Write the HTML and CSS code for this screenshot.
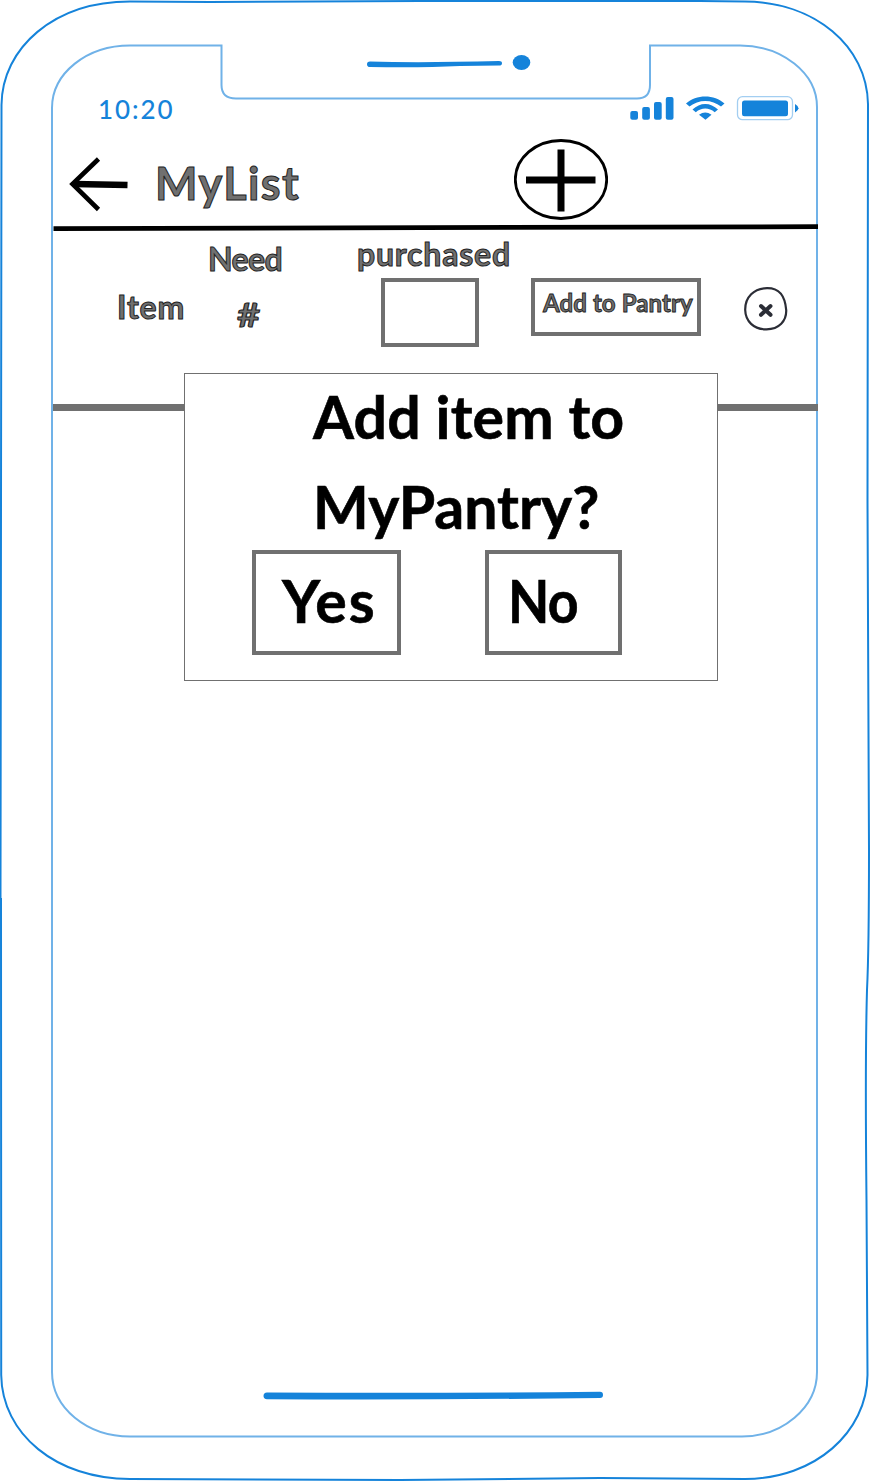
FILE: index.html
```html
<!DOCTYPE html>
<html lang="en">
<head>
<meta charset="utf-8">
<title>MyList</title>
<link rel="stylesheet" href="styles.css">
</head>
<body>
<div class="phone">
  <svg class="phone-frame" viewBox="0 0 870 1481" fill="none">
    <g stroke="#1583da" stroke-width="2">
      <path d="M0.500 900 L1.500 105 C2 48 54 1.500 130 1.500 L210 2 L420 1 L700 1 L745 1.500 C815 2 867 46 868 104 L867.500 500 L869 850 Q869 950 867 990 Q865 1060 866.500 1200 L867.500 1375 C867 1432 815 1479 745 1479 L600 1478 L400 1480 L130 1479 C56 1479 2 1434 1.200 1375 L1 898"/>
    </g>
    <path stroke="#70b2e8" stroke-width="2" d="M221.500 45.500 V85 Q221.500 98.500 236 98.500 H637 Q650 98.500 650 85 V45.500 H740 C782 45.500 817 73 817 107 V1372 C817 1408 782 1436.500 742 1436.500 H130 C87 1436.500 52 1408 52 1372 V108 C52 73 87 45.500 130 45.500 Z"/>
    <path fill="#1583da" d="M370 61.500 Q420 63 499 61 Q502 61 502 63.200 Q502 65.500 499 65.500 L460 66 Q420 68 370 67 Q367 67 367 64.200 Q367 61.500 370 61.500 Z"/>
    <ellipse fill="#1583da" cx="521.500" cy="62.500" rx="8.800" ry="7.500"/>
    <path fill="#1583da" d="M267 1392.500 Q430 1393.500 600 1391.700 Q603 1391.700 603 1395 Q603 1398 600 1398 Q430 1400 267 1399.200 Q263.500 1399 263.500 1396 Q263.500 1392.500 267 1392.500 Z"/>
  </svg>

  <main class="screen">
    <div class="status-bar">
      <span class="clock">10:20</span>
      <svg class="status-icons" viewBox="0 0 170 26" fill="#1583da">
        <rect x="0.300" y="15" width="7.700" height="8.700" rx="2"/>
        <rect x="12.200" y="11" width="7.700" height="12.700" rx="2"/>
        <rect x="24" y="6" width="7.700" height="17.700" rx="2"/>
        <rect x="35.800" y="1" width="7.700" height="22.700" rx="2"/>
        <path d="M56 7.500 C66 -2 84.500 -2 94.500 7.500 L91 10.500 C82 3 68.500 3 59.500 10.500 Z"/>
        <path d="M62.500 13.500 C70 6 80.500 6 88 13.500 L84.700 16.300 C79 11.300 71.500 11.300 65.800 16.300 Z"/>
        <path d="M69 18.700 Q75.300 14.500 81.500 18.700 L75.500 23.700 Z"/>
        <rect x="107.500" y="0.700" width="55" height="23" rx="5" fill="none" stroke="#a3cef1" stroke-width="1.300"/>
        <rect x="112" y="4.500" width="46" height="15.700" rx="2.500"/>
        <path d="M165 8 Q172 12.200 165 16.500 Z"/>
      </svg>
    </div>

    <header class="app-header">
      <svg class="back-icon" viewBox="0 0 60 56" stroke="#000" fill="none">
        <path stroke-width="4.600" d="M29.500 3 L3.500 28 L29.500 53.500"/>
        <path stroke-width="6.600" d="M5 28 L58.500 29"/>
      </svg>
      <h1 class="title sketch">MyList</h1>
      <svg class="add-icon" viewBox="0 0 94 82" stroke="#000" fill="none">
        <ellipse cx="47" cy="40.500" rx="45.700" ry="39" stroke-width="2.800"/>
        <path stroke-width="7" d="M47 10.500 V72.500 M12 41 H81.500"/>
      </svg>
    </header>
    <svg class="header-rule" viewBox="0 0 765 8"><path d="M0.500 2.200 L765 0.300 V5.100 L0.500 7 Z"/></svg>

    <section class="item-row">
      <div class="cell-item sketch">Item</div>
      <div class="cell-need"><span class="need sketch">Need</span><span class="hash sketch">#</span></div>
      <div class="cell-bought"><span class="bought sketch">purchased</span><span class="count-box"></span></div>
      <div class="pantry-button"><span class="pantry-label sketch">Add to Pantry</span></div>
      <svg class="remove-icon" viewBox="0 0 44 44" fill="none" stroke="#2b2d36">
        <path stroke-width="2.200" d="M23 1.200 C36 1 41 9 42.200 23 C42.700 34 35 42.300 22.500 42.300 C9.500 42.500 1.500 34 1.200 23 C1 10 10 1.500 23 1.200 Z"/>
        <path stroke-width="4" stroke-linecap="round" d="M17 19 L26.500 27.800 M26.500 19 L17 27.800"/>
      </svg>
    </section>
  </main>

  <div class="dialog">
    <p class="question"><span class="line-one">Add item to</span><span class="line-two">MyPantry?</span></p>
    <div class="choices">
      <div class="choice yes"><span>Yes</span></div>
      <div class="choice no"><span>No</span></div>
    </div>
  </div>
</div>
</body>
</html>
```
FILE: styles.css
```css
* { box-sizing: border-box; }
body { margin: 0; background: #fff; font-family: Lato, "Open Sans", sans-serif; }
.phone { position: relative; width: 870px; height: 1481px; overflow: hidden; }
.phone-frame { position: absolute; inset: 0; width: 870px; height: 1481px; }
.phone svg { display: block; flex: none; }
.screen { position: relative; display: flex; flex-direction: column; width: 765px; margin-left: 53px; padding-top: 90px; }
.sketch { color: #707070; -webkit-text-stroke: 1px #222; font-weight: 700; white-space: nowrap; }

.status-bar { display: flex; align-items: flex-start; height: 44px; padding-left: 45px; color: #1583da; }
.clock { width: 532px; font-size: 26px; font-weight: 500; line-height: 38px; letter-spacing: 1.900px; }
.status-icons { width: 170px; height: 26px; margin-top: 6px; }

.app-header { display: flex; height: 90px; padding-left: 16px; }
.back-icon { width: 60px; height: 56px; margin-top: 22px; }
.title { width: 359px; margin: 22px 0 0 26px; font-size: 45px; line-height: 54px; letter-spacing: 1.400px; }
.add-icon { width: 94px; height: 82px; margin-top: 5px; }
.header-rule { width: 765px; height: 8px; }

.item-row { display: flex; height: 179px; border-bottom: 7px solid #707070; font-size: 32px; line-height: 40px; }
.cell-item { width: 91px; margin: 55px 0 0 64px; letter-spacing: .9px; }
.cell-need { display: flex; flex-direction: column; width: 149px; padding-top: 7px; }
.need { letter-spacing: -.6px; }
.hash { margin: 16px 0 0 29px; transform: scaleX(1.25); transform-origin: left; width: 20px; }
.cell-bought { display: flex; flex-direction: column; width: 174px; padding-top: 2px; }
.bought { letter-spacing: .8px; }
.count-box { width: 98px; height: 69px; margin: 4px 0 0 24px; border: 4px solid #707070; }
.pantry-button { width: 170px; height: 58px; margin-top: 46px; padding: 5px 0 0 8px; border: 4px solid #707070; }
.pantry-label { display: block; font-size: 24px; line-height: 32px; letter-spacing: .1px; -webkit-text-stroke-width: .9px; }
.remove-icon { width: 44px; height: 44px; margin: 55px 0 0 43px; }

.dialog { position: absolute; left: 184px; top: 373px; width: 534px; height: 308px; border: 1px solid #707070; background: #fff; font-size: 59px; font-weight: 700; -webkit-text-stroke: .6px #000; }
.question { display: flex; flex-direction: column; height: 180px; margin: -2px 0 0; padding-left: 128px; line-height: 90px; white-space: nowrap; }
.line-one { letter-spacing: .2px; }
.choices { display: flex; gap: 84px; margin: -2px 0 0 67px; }
.choice { height: 105px; border: 4px solid #707070; line-height: 93px; }
.yes { width: 149px; padding-left: 26px; letter-spacing: 1.800px; }
.no { width: 137px; padding-left: 19px; letter-spacing: -1px; }
.no span { display: inline-block; transform: scaleX(.91); transform-origin: left; }
```
